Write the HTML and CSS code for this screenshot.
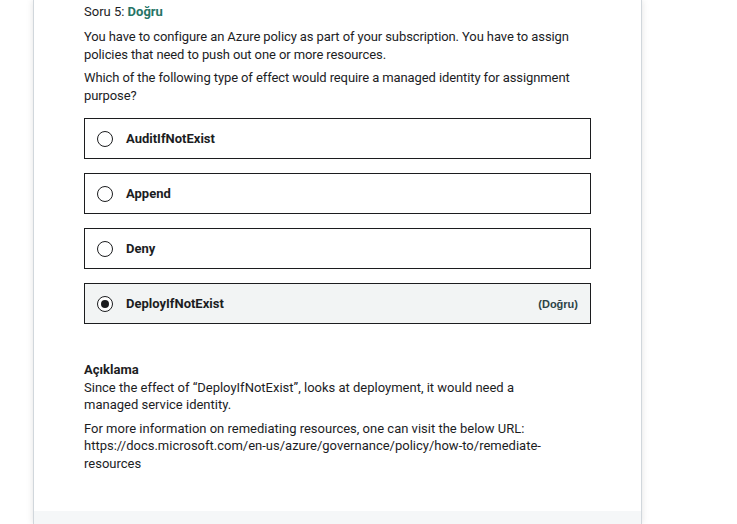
FILE: index.html
```html
<!DOCTYPE html>
<html lang="tr">
<head>
<meta charset="utf-8">
<title>Soru 5</title>
<link rel="stylesheet" href="styles.css">
</head>
<body>
<div class="page">
  <div class="card">
    <div class="card-body">
      <div class="q-header">Soru 5: <span class="q-result">Doğru</span></div>
      <div class="q-prompt">
        <p>You have to configure an Azure policy as part of your subscription. You have to assign policies that need to push out one or more resources.</p>
        <p>Which of the following type of effect would require a managed identity for assignment purpose?</p>
      </div>
      <ul class="answers">
        <li class="answer"><span class="radio"></span><span class="answer-text">AuditIfNotExist</span></li>
        <li class="answer"><span class="radio"></span><span class="answer-text">Append</span></li>
        <li class="answer"><span class="radio"></span><span class="answer-text">Deny</span></li>
        <li class="answer answer-correct"><span class="radio radio-checked"></span><span class="answer-text">DeployIfNotExist</span><span class="answer-tag">(Doğru)</span></li>
      </ul>
      <div class="explanation">
        <div class="exp-title">Açıklama</div>
        <p>Since the effect of “DeployIfNotExist”, looks at deployment, it would need a managed service identity.</p>
        <p>For more information on remediating resources, one can visit the below URL: https://docs.microsoft.com/en-us/azure/governance/policy/how-to/remediate-resources</p>
      </div>
    </div>
    <div class="card-footer"></div>
  </div>
</div>
</body>
</html>
```
FILE: styles.css
```css
html, body {
  margin: 0;
  padding: 0;
  background: #ffffff;
}
body {
  font-family: Roboto, "Liberation Sans", Arial, sans-serif;
  font-size: 13px;
  line-height: 18px;
  color: #1c1d1f;
  height: 524px;
  overflow: hidden;
}
.page {
  padding-left: 33px;
  height: 524px;
}
.card {
  width: 607px;
  height: 524px;
  border-left: 1px solid #d1d7dc;
  border-right: 1px solid #d1d7dc;
  box-shadow: -2px 0 6px rgba(0, 0, 0, 0.06), 2px 0 6px rgba(0, 0, 0, 0.06);
  display: flex;
  flex-direction: column;
  background: #ffffff;
}
.card-body {
  padding: 3px 51px 0 50px;
  flex: 0 0 511px;
  box-sizing: border-box;
}
.card-footer {
  flex: 1;
  background: #f5f7f8;
}
.q-header {
  color: #1c1d1f;
}
.q-result {
  color: #267466;
  font-weight: 700;
}
.q-prompt {
  margin-top: 7px;
  letter-spacing: -0.1px;
}
.q-prompt p {
  margin: 0 0 5px;
}
.answers {
  list-style: none;
  margin: 13px 0 0;
  padding: 0;
  display: flex;
  flex-direction: column;
  gap: 14px;
  width: 507px;
}
.answer {
  box-sizing: border-box;
  height: 41px;
  border: 1px solid #1c1d1f;
  display: flex;
  align-items: center;
  padding: 0 12px 0 12px;
}
.answer-correct {
  background: #f2f4f4;
}
.radio {
  box-sizing: border-box;
  width: 16px;
  height: 16px;
  border: 1.5px solid #1c1d1f;
  border-radius: 50%;
  display: flex;
  align-items: center;
  justify-content: center;
  flex: 0 0 16px;
  background: #ffffff;
}
.radio-checked::after {
  content: "";
  width: 8px;
  height: 8px;
  border-radius: 50%;
  background: #1c1d1f;
}
.answer-text {
  margin-left: 13px;
  font-weight: 700;
  flex: 1;
}
.answer-tag {
  font-family: "Liberation Sans", Arial, sans-serif;
  font-size: 11px;
  font-weight: 700;
  color: #2d4346;
}
.explanation {
  margin-top: 37px;
  width: 470px;
  line-height: 17.5px;
}
.exp-title {
  font-weight: 700;
}
.explanation p {
  margin: 0 0 6px;
}
```
